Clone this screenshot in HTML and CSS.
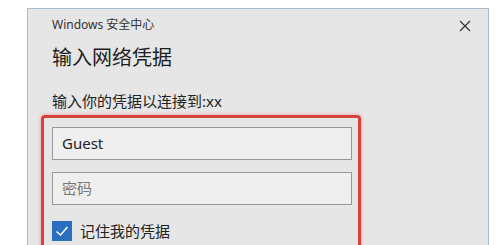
FILE: index.html
```html
<!DOCTYPE html>
<html lang="zh-CN">
<head>
  <meta charset="UTF-8" />
  <title>Windows 安全中心</title>
  <link rel="stylesheet" href="styles.css">
</head>
<body>

  <div class="dialog">
    <!-- 标题栏 -->
    <div class="titlebar">
      <span class="app-name">Windows 安全中心</span>
      <span class="close">
        <svg width="12" height="12" viewBox="0 0 12 12">
          <path d="M1 1 L11 11 M11 1 L1 11" stroke="#333" stroke-width="1.2" fill="none"/>
        </svg>
      </span>
    </div>

    <h1 class="heading">输入网络凭据</h1>
    <p class="hint">输入你的凭据以连接到:xx</p>

    <!-- 红框标注区域 -->
    <div class="credentials">
      <div class="field">Guest</div>
      <div class="field placeholder">密码</div>
      <label class="remember">
        <span class="checkbox">
          <svg width="14" height="14" viewBox="0 0 14 14">
            <path d="M1.5 7.5 L5.5 11 L12.5 3" stroke="#fff" stroke-width="1.5" fill="none"/>
          </svg>
        </span>
        记住我的凭据
      </label>
    </div>
  </div>

</body>
</html>
```

FILE: styles.css
```css
* {
  margin: 0;
  padding: 0;
  box-sizing: border-box;
}

html, body {
  height: 100%;
  overflow: hidden;
}

body {
  background: #fff;
  font-family: "Noto Sans", "Noto Sans CJK SC", sans-serif;
  color: #222;
  padding-top: 8px;
}

/* 对话框，下半部分被截掉 */
.dialog {
  margin-left: 27px;
  width: 462px;
  height: 100%;
  background: #e6e6e6;
  border: 1px solid #a8bccd;
  border-bottom: none;
  padding: 0 0 0 24px;
  display: flex;
  flex-direction: column;
}

/* 标题栏 */
.titlebar {
  display: flex;
  justify-content: space-between;
  align-items: center;
  padding: 8px 17px 0 0;
  height: 24px;
}

.app-name {
  font-size: 12px;
  line-height: 16px;
  color: #333;
}

.close {
  display: flex;
  width: 12px;
  height: 12px;
  margin-top: 2px;
}

.heading {
  margin-top: 11px;
  font-size: 20px;
  font-weight: normal;
  line-height: 28px;
  color: #1e1e1e;
}

.hint {
  margin-top: 19px;
  font-size: 15px;
  line-height: 20px;
  color: #222;
}

/* 红色标注框 */
.credentials {
  margin: 4px 0 0 -11px;
  width: 320px;
  padding: 9px 0 0 8px;
  border: 3px solid #d6413b;
  border-bottom: none;
  border-radius: 4px 4px 0 0;
  box-shadow: 0 0 3px 1px rgba(255, 140, 140, 0.55);
  display: flex;
  flex-direction: column;
  flex: 1;
}

.field {
  width: 300px;
  height: 33px;
  border: 1px solid #999;
  background: #efefef;
  padding-left: 9px;
  font-size: 15px;
  line-height: 31px;
  color: #222;
}

.field + .field {
  margin-top: 12px;
}

.field.placeholder {
  color: #777;
}

.remember {
  margin-top: 16px;
  display: flex;
  align-items: center;
  font-size: 15px;
  line-height: 20px;
  color: #222;
}

.checkbox {
  width: 20px;
  height: 20px;
  background: #2a6fbf;
  display: flex;
  align-items: center;
  justify-content: center;
  margin-right: 8px;
}
```
